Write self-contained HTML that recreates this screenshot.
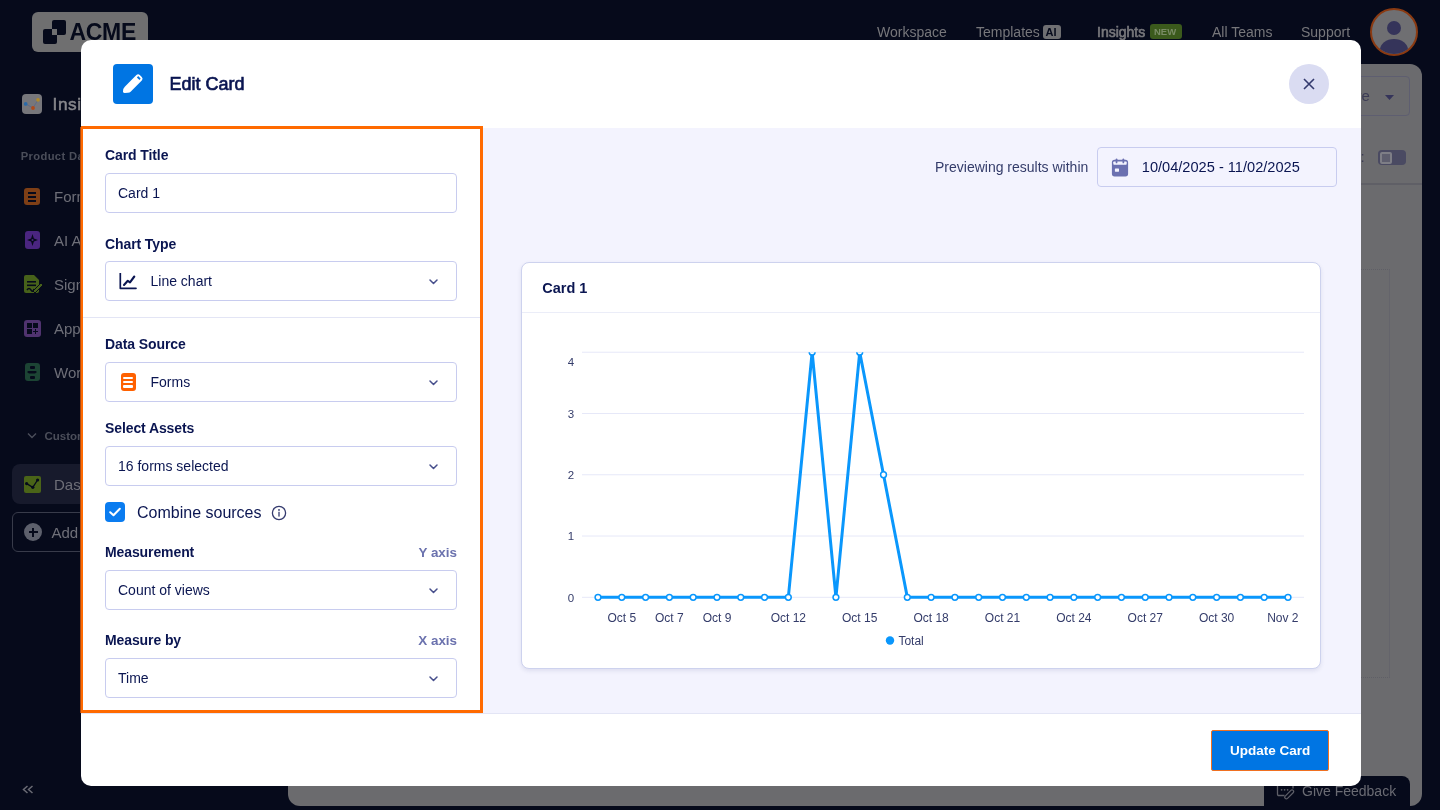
<!DOCTYPE html>
<html><head><meta charset="utf-8">
<style>
*{box-sizing:border-box;margin:0;padding:0}
body{will-change:transform}
html,body{width:1440px;height:810px;overflow:hidden;background:#060a1b;font-family:"Liberation Sans",sans-serif;position:relative}
.abs{position:absolute}
.t{position:absolute;white-space:nowrap;line-height:1}
/* background */
.logo{left:32px;top:12px;width:116px;height:40px;border-radius:6px;background:#6f6f70}
.nav{color:#77777b;font-size:14px}
.gpanel{left:288px;top:64px;width:1134px;height:742px;border-radius:12px;background:#6b6b6e}
/* modal */
.modal{left:81px;top:40px;width:1280px;height:746px;background:#fff;border-radius:10px;overflow:hidden}
.lbl{font-size:14px;font-weight:700;color:#0a1551;letter-spacing:-0.1px}
.field{position:absolute;left:24px;width:352px;height:40px;border:1px solid #c8ccef;border-radius:4px;background:#fff}
.ftxt{font-size:14px;color:#0a1551}
.chev{position:absolute;right:18px;top:17px;width:9px;height:6px}
.axl{font-size:13.4px;font-weight:700;color:#6b72ae}
.side{font-size:15px;color:#6e6f78}
.med{font-weight:400;-webkit-text-stroke:0.65px currentColor}
.ylab{font-size:11px;color:#343c6a}
.xlab{font-size:11.5px;color:#343c6a}
</style></head><body>

<!-- ===== background app ===== -->
<div class="abs logo">
  <div class="abs" style="left:20px;top:8px;width:14.3px;height:14.6px;background:#060a1b;border-radius:2px"></div>
  <div class="abs" style="left:11px;top:17.2px;width:14.3px;height:14.6px;background:#060a1b;border-radius:2px"></div>
  <div class="abs" style="left:20px;top:17.2px;width:5.3px;height:5.4px;background:#6f6f70"></div>
  <div class="t" style="left:37.5px;top:9.3px;font-size:23px;font-weight:700;color:#060a1b;letter-spacing:-0.3px">ACME</div>
</div>

<div class="t nav" style="left:877px;top:25px">Workspace</div>
<div class="t nav" style="left:976px;top:25px">Templates</div>
<div class="abs" style="left:1043px;top:25px;width:18px;height:14px;border-radius:3px;background:#6f6f72"></div>
<div class="t" style="left:1045.5px;top:26.5px;font-size:11px;font-weight:700;color:#060a1b">AI</div>
<div class="t nav med" style="left:1097px;top:25px">Insights</div>
<div class="abs" style="left:1150px;top:24px;width:32px;height:15px;border-radius:3px;background:#3b5a1c"></div>
<div class="t" style="left:1154px;top:27px;font-size:9.5px;font-weight:700;color:#7a8c66">NEW</div>
<div class="t nav" style="left:1212px;top:25px">All Teams</div>
<div class="t nav" style="left:1301px;top:25px">Support</div>
<div class="abs" style="left:1370px;top:8px;width:48px;height:48px;border-radius:50%;border:2px solid #8a3a12;background:#6f6f72;overflow:hidden">
  <div class="abs" style="left:15px;top:11px;width:14px;height:14px;border-radius:50%;background:#35345a"></div>
  <div class="abs" style="left:8px;top:29px;width:28px;height:22px;border-radius:50% 50% 0 0;background:#35345a"></div>
</div>

<!-- sidebar -->
<div class="abs" style="left:22px;top:94px;width:20px;height:20px;border-radius:4px;background:#77777b"></div>
<svg class="abs" style="left:22px;top:94px" width="20" height="20"><path d="M3.7 9.9 L11 14 L16 5.9" stroke="#5a6a8a" stroke-width="0.9" fill="none"/><circle cx="3.7" cy="9.9" r="1.9" fill="#2a6aa8"/><circle cx="11" cy="14" r="1.9" fill="#b04a1a"/><circle cx="16" cy="5.9" r="1.8" fill="#b08a2a"/></svg>
<div class="t med" style="left:52.5px;top:96px;font-size:17.3px;color:#87878c;letter-spacing:0.6px;-webkit-text-stroke-width:0.5px">Insights</div>
<div class="t" style="left:20.8px;top:151px;font-size:11.2px;font-weight:700;color:#4b4e5a;letter-spacing:0.35px">Product Data</div>


<!-- sidebar items -->
<div class="abs" style="left:24px;top:188px;width:16px;height:17px;border-radius:3px;background:#7e3f16"></div>
<div class="abs" style="left:28px;top:192px;width:8px;height:2px;background:#060a1b"></div>
<div class="abs" style="left:28px;top:196px;width:8px;height:2px;background:#060a1b"></div>
<div class="abs" style="left:28px;top:200px;width:8px;height:2px;background:#060a1b"></div>
<div class="t side" style="left:54px;top:188.7px">Forms</div>

<div class="abs" style="left:24.5px;top:231px;width:15px;height:18px;border-radius:3px;background:#4a2580"></div>
<svg class="abs" style="left:24.5px;top:231px" width="15" height="18"><path d="M7.5 3 L8.9 7.6 L13 9 L8.9 10.4 L7.5 15 L6.1 10.4 L2 9 L6.1 7.6 Z" fill="#060a1b"/><circle cx="7.5" cy="9" r="1" fill="#4a2580"/></svg>
<div class="t side" style="left:54px;top:232.7px">AI Agents</div>

<svg class="abs" style="left:24px;top:275px" width="19" height="19"><path d="M0 2 Q0 0 2 0 L10 0 L15 5 L15 16 Q15 18 13 18 L2 18 Q0 18 0 16 Z" fill="#47621a"/><rect x="3" y="6" width="9" height="1.6" fill="#060a1b"/><rect x="3" y="9.5" width="9" height="1.6" fill="#060a1b"/><path d="M3 15 q2-3 4 0 t3 -1" stroke="#060a1b" stroke-width="1.4" fill="none"/><path d="M9 16 L17 8 L19 10 L11 18 Z" fill="#47621a" stroke="#060a1b" stroke-width="1"/></svg>
<div class="t side" style="left:54px;top:276.7px">Sign</div>

<div class="abs" style="left:24px;top:320px;width:16.5px;height:16.5px;border-radius:3px;background:#50336f"></div>
<div class="abs" style="left:26.5px;top:322.5px;width:5px;height:5px;background:#060a1b"></div>
<div class="abs" style="left:33px;top:322.5px;width:5px;height:5px;background:#060a1b"></div>
<div class="abs" style="left:26.5px;top:329px;width:5px;height:5px;background:#060a1b"></div>
<div class="abs" style="left:33px;top:331px;width:5px;height:1.2px;background:#060a1b"></div>
<div class="abs" style="left:34.9px;top:329px;width:1.2px;height:5px;background:#060a1b"></div>
<div class="t side" style="left:54px;top:320.7px">Apps</div>

<div class="abs" style="left:24.5px;top:363px;width:15px;height:18px;border-radius:3px;background:#1c4434"></div>
<div class="abs" style="left:29.5px;top:366px;width:5px;height:2.5px;border-radius:1px;background:#060a1b"></div>
<div class="abs" style="left:27px;top:370.5px;width:10px;height:3px;background:#060a1b;clip-path:polygon(0 50%,20% 0,80% 0,100% 50%,80% 100%,20% 100%)"></div>
<div class="abs" style="left:29.5px;top:376px;width:5px;height:2.5px;border-radius:1px;background:#060a1b"></div>
<div class="t side" style="left:54px;top:364.7px">Workflows</div>

<svg class="abs" style="left:27px;top:432px" width="10" height="7"><path d="M1 1.5 L5 5.5 L9 1.5" stroke="#4b4e5a" stroke-width="1.4" fill="none"/></svg>
<div class="t" style="left:44.5px;top:430.5px;font-size:11.5px;font-weight:700;color:#4b4e5a">Customize</div>

<div class="abs" style="left:12px;top:464px;width:260px;height:40px;border-radius:8px;background:#171a2c"></div>
<div class="abs" style="left:24px;top:476px;width:16.5px;height:16.5px;border-radius:2px;background:#4a6418"></div>
<svg class="abs" style="left:24px;top:476px" width="17" height="17"><path d="M2.6 7.6 L8.8 11.3 L13.6 4" stroke="#060a1b" stroke-width="1.3" fill="none"/><circle cx="2.6" cy="7.6" r="1.6" fill="#060a1b"/><circle cx="8.8" cy="11.3" r="1.6" fill="#060a1b"/><circle cx="13.6" cy="4" r="1.6" fill="#060a1b"/></svg>
<div class="t side" style="left:54px;top:476.7px">Dashboard</div>

<div class="abs" style="left:12px;top:512px;width:260px;height:40px;border-radius:6px;border:1px solid #383b4a"></div>
<div class="abs" style="left:24px;top:523px;width:18px;height:18px;border-radius:50%;background:#5d606c"></div>
<div class="abs" style="left:28.5px;top:531.3px;width:9px;height:1.6px;background:#060a1b"></div>
<div class="abs" style="left:32.2px;top:527.5px;width:1.6px;height:9px;background:#060a1b"></div>
<div class="t side" style="left:51.5px;top:525.2px;color:#6e6f78">Add</div>

<svg class="abs" style="left:22px;top:785px" width="12" height="10"><path d="M5.5 1 L1.5 4.5 L5.5 8 M10.5 1 L6.5 4.5 L10.5 8" stroke="#6a6b74" stroke-width="1.5" fill="none"/></svg>
<div class="gpanel abs"></div>
<div class="abs" style="left:1288px;top:76px;width:122px;height:40px;border:1px solid #5e5e70;border-radius:4px"></div>
<div class="t" style="left:1356.5px;top:88px;font-size:15px;color:#3c3c55">re</div>
<svg class="abs" style="left:1384.5px;top:95px" width="9" height="6"><path d="M0 0 L9 0 L4.5 5 Z" fill="#35345a"/></svg>
<div class="t" style="left:1360.5px;top:149px;font-size:15px;color:#3c3c55">:</div>
<div class="abs" style="left:1378px;top:149.5px;width:28px;height:15.5px;border-radius:4px;background:#4a4a62"></div>
<div class="abs" style="left:1380px;top:151.5px;width:11.5px;height:12px;border-radius:2px;background:#5e5e6e;border:2px solid #7e7e86"></div>
<div class="abs" style="left:1290px;top:183px;width:132px;height:1.5px;background:#5f5f66"></div>
<div class="abs" style="left:1290px;top:268.5px;width:100px;height:409px;border-right:1px solid #64646b;border-top:1px dotted #5f5f66;border-bottom:1px dotted #5f5f66"></div>
<div class="abs" style="left:1264px;top:776px;width:146px;height:40px;border-radius:8px;background:#060a1b"></div>
<svg class="abs" style="left:1276px;top:780px" width="20" height="20"><path d="M8.5 15.5 H2.8 Q1.5 15.5 1.5 14.2 V3.3 Q1.5 2 2.8 2 H15.7 Q17 2 17 3.3 V8.5" stroke="#5e5f68" stroke-width="1.3" fill="none"/><circle cx="5.6" cy="9.8" r="0.85" fill="#5e5f68"/><circle cx="8.6" cy="9.8" r="0.85" fill="#5e5f68"/><circle cx="11.6" cy="9.8" r="0.85" fill="#5e5f68"/><g transform="translate(13.2,14.4) rotate(45)"><rect x="-1.6" y="-5.6" width="3.2" height="11.2" rx="1.6" stroke="#5e5f68" stroke-width="1.2" fill="none"/></g></svg>
<div class="t" style="left:1302px;top:784px;font-size:14px;color:#6a6b73">Give Feedback</div>


<div class="abs" style="left:80px;top:127px;width:1px;height:586px;background:#a84a14"></div>
<!-- ===== modal ===== -->
<div class="modal abs">
  <!-- header -->
  <div class="abs" style="left:32px;top:24px;width:40px;height:40px;border-radius:4px;background:#0075e3"></div>
  <div class="t med" style="left:88.5px;top:35px;font-size:18px;color:#0a1551">Edit Card</div>
  <div class="abs" style="left:1208px;top:24px;width:40px;height:40px;border-radius:50%;background:#dadcf2"></div>
  <div class="abs" style="left:0;top:88px;width:1280px;height:1px;background:#e3e5f5"></div>

  <!-- right preview area -->
  <div class="abs" style="left:401px;top:88px;width:879px;height:585px;background:#f3f3fe"></div>
  <div class="abs" style="left:0;top:673px;width:1280px;height:1px;background:#e3e5f5"></div>
  <div class="t" style="left:854px;top:120.4px;font-size:14px;color:#343c6a">Previewing results within</div>
  <div class="abs" style="left:1016px;top:107px;width:240px;height:40px;border:1px solid #c8ccef;border-radius:4px"></div>
  <svg class="abs" style="left:1030px;top:117.5px" width="18" height="19" viewBox="0 0 18 19"><rect x="0.9" y="1.8" width="16.2" height="16.6" rx="2.6" fill="#6b70b0"/><rect x="2.3" y="3.4" width="13.4" height="3.4" rx="0.8" fill="#f3f3fe"/><rect x="4.7" y="0.4" width="1.7" height="4.9" rx="0.85" fill="#6b70b0"/><rect x="11.5" y="0.4" width="1.7" height="4.9" rx="0.85" fill="#6b70b0"/><rect x="3.9" y="10.5" width="4.1" height="3.2" rx="0.4" fill="#f3f3fe"/></svg>
  <div class="t" style="left:1060.8px;top:120.2px;font-size:14.6px;color:#0a1551">10/04/2025 - 11/02/2025</div>
  <div class="abs" style="left:440px;top:222px;width:800px;height:407px;background:#fff;border:1.5px solid #cdd2ee;border-radius:8px;box-shadow:0 2px 4px rgba(40,50,110,0.10)"></div>
  <div class="abs" style="left:441px;top:271.5px;width:798px;height:1.5px;background:#ebedf8"></div>
  <div class="t" style="left:461.3px;top:240.9px;font-size:14.5px;font-weight:700;color:#0a1551">Card 1</div>


  <!-- left panel -->
  <div class="abs" style="left:0;top:86px;width:402px;height:587px;border:3px solid #ff6a00;border-left-width:2px;background:#fff"></div>

<div class="t lbl" style="left:24px;top:108.20px">Card Title</div>
<div class="field" style="top:133px"><div class="t ftxt" style="left:12px;top:12px">Card 1</div></div>
<div class="t lbl" style="left:24px;top:196.80px">Chart Type</div>
<div class="field" style="top:221px">
<svg class="abs" style="left:13px;top:11px" width="18" height="18" viewBox="0 0 18 18"><path d="M1.3 0 V15.3 H17" stroke="#0a1551" stroke-width="1.7" fill="none" stroke-linecap="round" stroke-linejoin="round"/><path d="M5 12 L8.8 7.8 L11 9.3 L15.3 3.5" stroke="#0a1551" stroke-width="2.1" fill="none" stroke-linejoin="round" stroke-linecap="round"/></svg>
<div class="t ftxt" style="left:44.5px;top:12px">Line chart</div><svg class="chev" width="9" height="6" viewBox="0 0 9 6"><path d="M1 1 L4.5 4.5 L8 1" stroke="#474f8c" stroke-width="1.5" fill="none" stroke-linecap="round" stroke-linejoin="round"/></svg></div>
<div class="abs" style="left:2px;top:277px;width:397px;height:1px;background:#e3e5f5"></div>
<div class="t lbl" style="left:24px;top:297.10px">Data Source</div>
<div class="field" style="top:322px">
<div class="abs" style="left:14.5px;top:9.8px;width:15px;height:18px;border-radius:3px;background:#ff6100"></div>
<div class="abs" style="left:17.3px;top:13.7px;width:9.5px;height:2.5px;border-radius:1px;background:#fff"></div>
<div class="abs" style="left:17.3px;top:17.9px;width:9.5px;height:2.5px;border-radius:1px;background:#fff"></div>
<div class="abs" style="left:17.3px;top:22.1px;width:9.5px;height:2.5px;border-radius:1px;background:#fff"></div>
<div class="t ftxt" style="left:44.5px;top:12px">Forms</div><svg class="chev" width="9" height="6" viewBox="0 0 9 6"><path d="M1 1 L4.5 4.5 L8 1" stroke="#474f8c" stroke-width="1.5" fill="none" stroke-linecap="round" stroke-linejoin="round"/></svg></div>
<div class="t lbl" style="left:24px;top:381.40px">Select Assets</div>
<div class="field" style="top:406px"><div class="t ftxt" style="left:12px;top:12px">16 forms selected</div><svg class="chev" width="9" height="6" viewBox="0 0 9 6"><path d="M1 1 L4.5 4.5 L8 1" stroke="#474f8c" stroke-width="1.5" fill="none" stroke-linecap="round" stroke-linejoin="round"/></svg></div>
<div class="abs" style="left:24px;top:462px;width:20px;height:20px;border-radius:4px;background:#0a7cf0"></div>
<svg class="abs" style="left:24px;top:462px" width="20" height="20"><path d="M5.2 10.2 L8.5 13.3 L14.8 6.8" stroke="#fff" stroke-width="2" fill="none" stroke-linecap="round" stroke-linejoin="round"/></svg>
<div class="t" style="left:56px;top:465.2px;font-size:16px;color:#0a1551">Combine sources</div>
<svg class="abs" style="left:190px;top:464.5px" width="16" height="16" viewBox="0 0 16 16"><circle cx="8" cy="8" r="6.6" stroke="#343a6e" stroke-width="1.3" fill="none"/><circle cx="8" cy="4.9" r="0.95" fill="#343a6e"/><rect x="7.35" y="6.8" width="1.3" height="4.8" fill="#343a6e"/></svg>
<div class="t lbl" style="left:24px;top:505.40px">Measurement</div>
<div class="t axl" style="right:904px;top:506px">Y axis</div>
<div class="field" style="top:530px"><div class="t ftxt" style="left:12px;top:12px">Count of views</div><svg class="chev" width="9" height="6" viewBox="0 0 9 6"><path d="M1 1 L4.5 4.5 L8 1" stroke="#474f8c" stroke-width="1.5" fill="none" stroke-linecap="round" stroke-linejoin="round"/></svg></div>
<div class="t lbl" style="left:24px;top:593.40px">Measure by</div>
<div class="t axl" style="right:904px;top:594px">X axis</div>
<div class="field" style="top:618px"><div class="t ftxt" style="left:12px;top:12px">Time</div><svg class="chev" width="9" height="6" viewBox="0 0 9 6"><path d="M1 1 L4.5 4.5 L8 1" stroke="#474f8c" stroke-width="1.5" fill="none" stroke-linecap="round" stroke-linejoin="round"/></svg></div>

  <!-- footer button -->
  <div class="abs" style="left:1130px;top:690px;width:118px;height:41px;background:#0075e3;border:1px solid #f07020;border-radius:2px"></div>
  <div class="t" style="left:1149px;top:704px;font-size:13.5px;font-weight:700;color:#fff">Update Card</div>
</div>

<svg class="abs" style="left:0;top:0" width="1440" height="810">
<defs><clipPath id="pc"><rect x="560" y="352.22" width="760" height="260"/></clipPath></defs>
<rect x="582" y="596.80" width="722" height="1" fill="#e6e8f8"/>
<rect x="582" y="535.53" width="722" height="1" fill="#e6e8f8"/>
<rect x="582" y="474.26" width="722" height="1" fill="#e6e8f8"/>
<rect x="582" y="412.99" width="722" height="1" fill="#e6e8f8"/>
<rect x="582" y="351.72" width="722" height="1" fill="#e6e8f8"/>
<text x="574.2" y="601.6" text-anchor="end" font-size="11.5" fill="#343c6a" font-family="Liberation Sans">0</text>
<text x="574.2" y="540.3" text-anchor="end" font-size="11.5" fill="#343c6a" font-family="Liberation Sans">1</text>
<text x="574.2" y="479.3" text-anchor="end" font-size="11.5" fill="#343c6a" font-family="Liberation Sans">2</text>
<text x="574.2" y="418.3" text-anchor="end" font-size="11.5" fill="#343c6a" font-family="Liberation Sans">3</text>
<text x="574.2" y="366.4" text-anchor="end" font-size="11.5" fill="#343c6a" font-family="Liberation Sans">4</text>
<g clip-path="url(#pc)">
<polyline points="598.00,597.30 621.79,597.30 645.59,597.30 669.38,597.30 693.17,597.30 716.97,597.30 740.76,597.30 764.55,597.30 788.34,597.30 812.14,352.22 835.93,597.30 859.72,352.22 883.52,474.76 907.31,597.30 931.10,597.30 954.90,597.30 978.69,597.30 1002.48,597.30 1026.28,597.30 1050.07,597.30 1073.86,597.30 1097.66,597.30 1121.45,597.30 1145.24,597.30 1169.03,597.30 1192.83,597.30 1216.62,597.30 1240.41,597.30 1264.21,597.30 1288.00,597.30" fill="none" stroke="#0a97fc" stroke-width="3" stroke-linejoin="miter"/>
<circle cx="598.00" cy="597.30" r="2.9" fill="#fff" stroke="#0a97fc" stroke-width="1.5"/>
<circle cx="621.79" cy="597.30" r="2.9" fill="#fff" stroke="#0a97fc" stroke-width="1.5"/>
<circle cx="645.59" cy="597.30" r="2.9" fill="#fff" stroke="#0a97fc" stroke-width="1.5"/>
<circle cx="669.38" cy="597.30" r="2.9" fill="#fff" stroke="#0a97fc" stroke-width="1.5"/>
<circle cx="693.17" cy="597.30" r="2.9" fill="#fff" stroke="#0a97fc" stroke-width="1.5"/>
<circle cx="716.97" cy="597.30" r="2.9" fill="#fff" stroke="#0a97fc" stroke-width="1.5"/>
<circle cx="740.76" cy="597.30" r="2.9" fill="#fff" stroke="#0a97fc" stroke-width="1.5"/>
<circle cx="764.55" cy="597.30" r="2.9" fill="#fff" stroke="#0a97fc" stroke-width="1.5"/>
<circle cx="788.34" cy="597.30" r="2.9" fill="#fff" stroke="#0a97fc" stroke-width="1.5"/>
<circle cx="812.14" cy="352.22" r="2.9" fill="#fff" stroke="#0a97fc" stroke-width="1.5"/>
<circle cx="835.93" cy="597.30" r="2.9" fill="#fff" stroke="#0a97fc" stroke-width="1.5"/>
<circle cx="859.72" cy="352.22" r="2.9" fill="#fff" stroke="#0a97fc" stroke-width="1.5"/>
<circle cx="883.52" cy="474.76" r="2.9" fill="#fff" stroke="#0a97fc" stroke-width="1.5"/>
<circle cx="907.31" cy="597.30" r="2.9" fill="#fff" stroke="#0a97fc" stroke-width="1.5"/>
<circle cx="931.10" cy="597.30" r="2.9" fill="#fff" stroke="#0a97fc" stroke-width="1.5"/>
<circle cx="954.90" cy="597.30" r="2.9" fill="#fff" stroke="#0a97fc" stroke-width="1.5"/>
<circle cx="978.69" cy="597.30" r="2.9" fill="#fff" stroke="#0a97fc" stroke-width="1.5"/>
<circle cx="1002.48" cy="597.30" r="2.9" fill="#fff" stroke="#0a97fc" stroke-width="1.5"/>
<circle cx="1026.28" cy="597.30" r="2.9" fill="#fff" stroke="#0a97fc" stroke-width="1.5"/>
<circle cx="1050.07" cy="597.30" r="2.9" fill="#fff" stroke="#0a97fc" stroke-width="1.5"/>
<circle cx="1073.86" cy="597.30" r="2.9" fill="#fff" stroke="#0a97fc" stroke-width="1.5"/>
<circle cx="1097.66" cy="597.30" r="2.9" fill="#fff" stroke="#0a97fc" stroke-width="1.5"/>
<circle cx="1121.45" cy="597.30" r="2.9" fill="#fff" stroke="#0a97fc" stroke-width="1.5"/>
<circle cx="1145.24" cy="597.30" r="2.9" fill="#fff" stroke="#0a97fc" stroke-width="1.5"/>
<circle cx="1169.03" cy="597.30" r="2.9" fill="#fff" stroke="#0a97fc" stroke-width="1.5"/>
<circle cx="1192.83" cy="597.30" r="2.9" fill="#fff" stroke="#0a97fc" stroke-width="1.5"/>
<circle cx="1216.62" cy="597.30" r="2.9" fill="#fff" stroke="#0a97fc" stroke-width="1.5"/>
<circle cx="1240.41" cy="597.30" r="2.9" fill="#fff" stroke="#0a97fc" stroke-width="1.5"/>
<circle cx="1264.21" cy="597.30" r="2.9" fill="#fff" stroke="#0a97fc" stroke-width="1.5"/>
<circle cx="1288.00" cy="597.30" r="2.9" fill="#fff" stroke="#0a97fc" stroke-width="1.5"/>
</g>
<text x="621.79" y="622.1" text-anchor="middle" font-size="12" fill="#343c6a" font-family="Liberation Sans">Oct 5</text>
<text x="669.38" y="622.1" text-anchor="middle" font-size="12" fill="#343c6a" font-family="Liberation Sans">Oct 7</text>
<text x="716.97" y="622.1" text-anchor="middle" font-size="12" fill="#343c6a" font-family="Liberation Sans">Oct 9</text>
<text x="788.34" y="622.1" text-anchor="middle" font-size="12" fill="#343c6a" font-family="Liberation Sans">Oct 12</text>
<text x="859.72" y="622.1" text-anchor="middle" font-size="12" fill="#343c6a" font-family="Liberation Sans">Oct 15</text>
<text x="931.10" y="622.1" text-anchor="middle" font-size="12" fill="#343c6a" font-family="Liberation Sans">Oct 18</text>
<text x="1002.48" y="622.1" text-anchor="middle" font-size="12" fill="#343c6a" font-family="Liberation Sans">Oct 21</text>
<text x="1073.86" y="622.1" text-anchor="middle" font-size="12" fill="#343c6a" font-family="Liberation Sans">Oct 24</text>
<text x="1145.24" y="622.1" text-anchor="middle" font-size="12" fill="#343c6a" font-family="Liberation Sans">Oct 27</text>
<text x="1216.62" y="622.1" text-anchor="middle" font-size="12" fill="#343c6a" font-family="Liberation Sans">Oct 30</text>
<text x="1298.5" y="622.1" text-anchor="end" font-size="12" fill="#343c6a" font-family="Liberation Sans">Nov 2</text>
<circle cx="890" cy="640.5" r="4.2" fill="#0a97fc"/>
<text x="898.4" y="644.5" font-size="12" fill="#343c6a" font-family="Liberation Sans">Total</text>
<g transform="translate(132.3,84.6) rotate(45)"><path d="M-3.8 -9.6 Q-3.8 -12 -1.4 -12 L1.4 -12 Q3.8 -12 3.8 -9.6 L3.8 6.2 Q3.8 7.4 2.6 8.8 L0.6 11.2 Q-0.4 12.3 -1.6 11.6 Q-3.8 10.2 -3.8 6.8 Z" fill="#fff"/><rect x="-1.8" y="-10.2" width="3.6" height="1.9" rx="0.3" fill="#0075e3"/></g>
<path d="M1304 79 L1314 89 M1314 79 L1304 89" stroke="#343a6e" stroke-width="1.6" stroke-linecap="butt"/>
</svg>
</body></html>
